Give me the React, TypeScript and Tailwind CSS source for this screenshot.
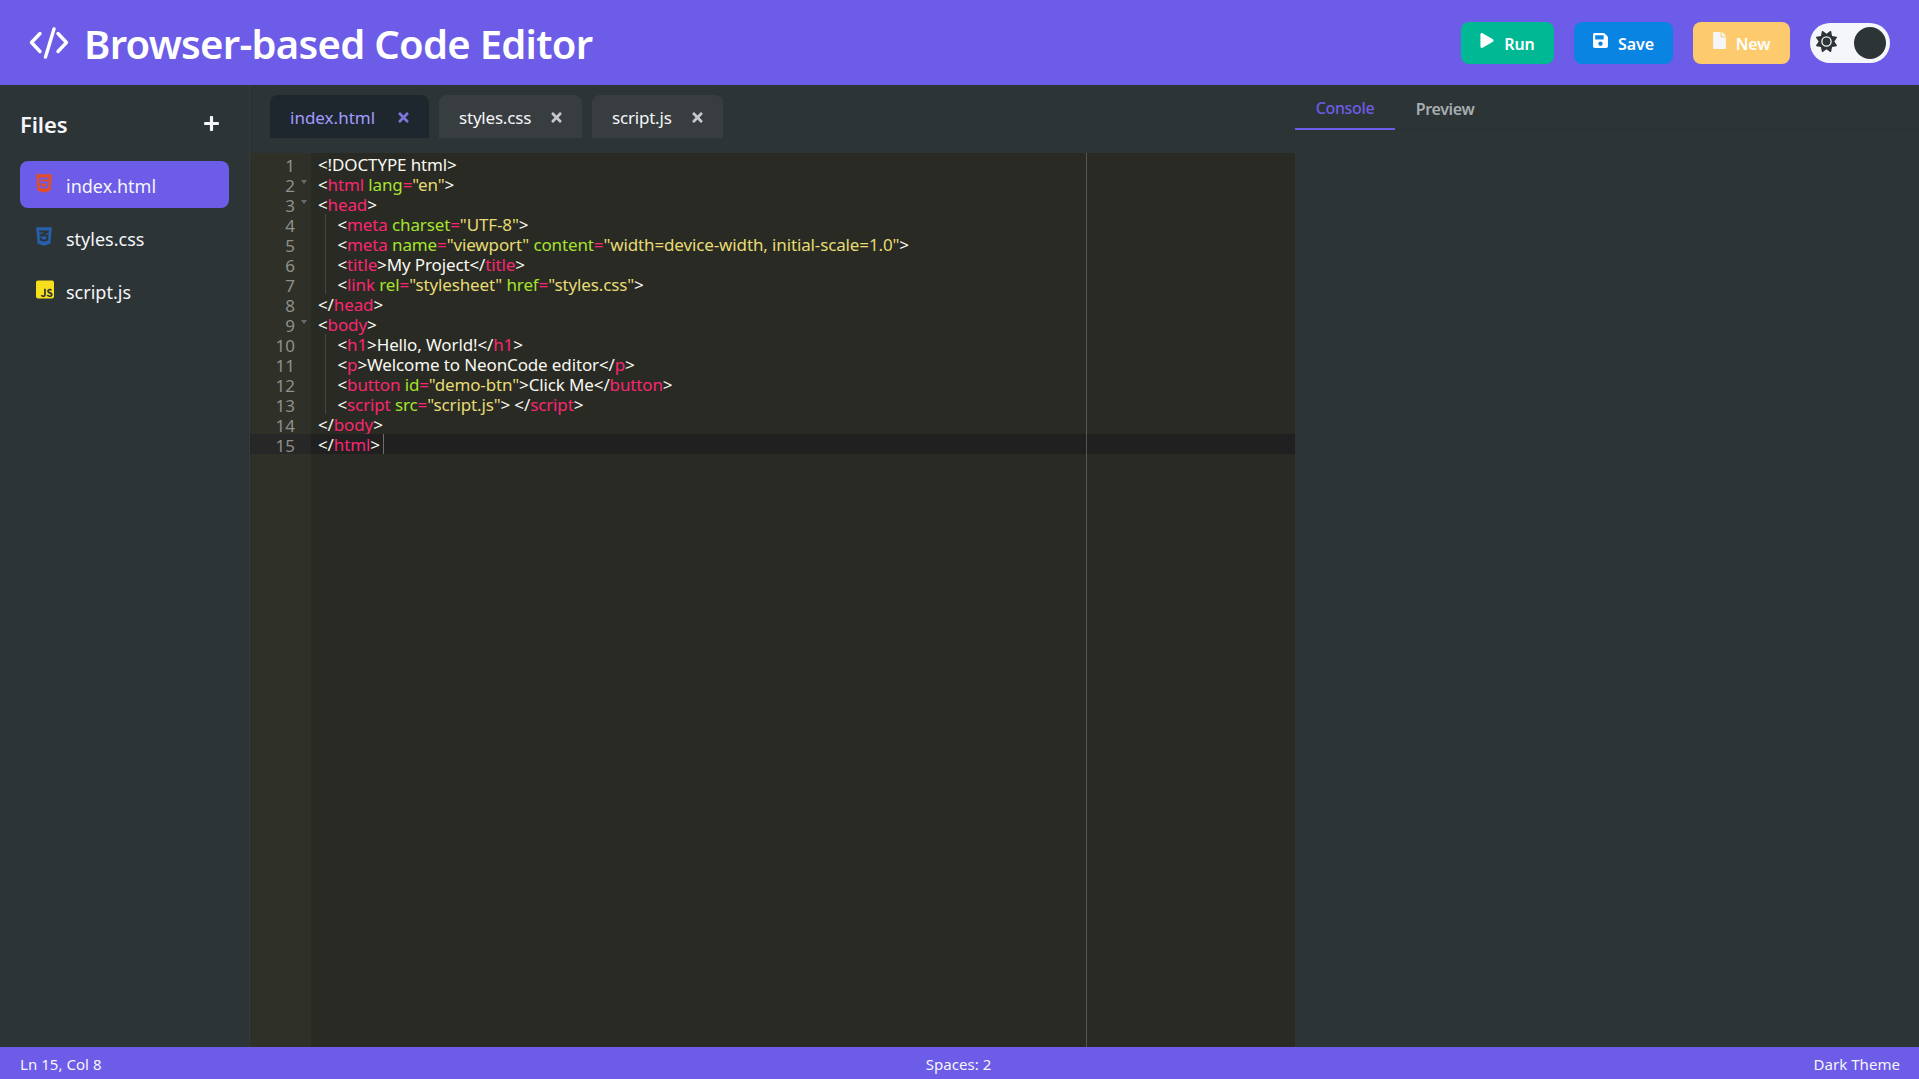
import React from "react";
import { FaPlay, FaSave, FaFile, FaPlus, FaTimes, FaHtml5, FaCss3Alt, FaJsSquare } from "react-icons/fa";
import { FaSun } from "react-icons/fa6";

type Seg = [string, string];
const W = "text-[#f8f8f2]";
const T = "text-[#f92672]";
const A = "text-[#a6e22e]";
const S = "text-[#e6db74]";

const lines: { indent: number; fold?: boolean; segs: Seg[] }[] = [
  { indent: 0, segs: [[W, "<!DOCTYPE html>"]] },
  { indent: 0, fold: true, segs: [[W, "<"], [T, "html"], [W, " "], [A, "lang"], [T, "="], [S, '"en"'], [W, ">"]] },
  { indent: 0, fold: true, segs: [[W, "<"], [T, "head"], [W, ">"]] },
  { indent: 1, segs: [[W, "<"], [T, "meta"], [W, " "], [A, "charset"], [T, "="], [S, '"UTF-8"'], [W, ">"]] },
  { indent: 1, segs: [[W, "<"], [T, "meta"], [W, " "], [A, "name"], [T, "="], [S, '"viewport"'], [W, " "], [A, "content"], [T, "="], [S, '"width=device-width, initial-scale=1.0"'], [W, ">"]] },
  { indent: 1, segs: [[W, "<"], [T, "title"], [W, ">My Project</"], [T, "title"], [W, ">"]] },
  { indent: 1, segs: [[W, "<"], [T, "link"], [W, " "], [A, "rel"], [T, "="], [S, '"stylesheet"'], [W, " "], [A, "href"], [T, "="], [S, '"styles.css"'], [W, ">"]] },
  { indent: 0, segs: [[W, "</"], [T, "head"], [W, ">"]] },
  { indent: 0, fold: true, segs: [[W, "<"], [T, "body"], [W, ">"]] },
  { indent: 1, segs: [[W, "<"], [T, "h1"], [W, ">Hello, World!</"], [T, "h1"], [W, ">"]] },
  { indent: 1, segs: [[W, "<"], [T, "p"], [W, ">Welcome to NeonCode editor</"], [T, "p"], [W, ">"]] },
  { indent: 1, segs: [[W, "<"], [T, "button"], [W, " "], [A, "id"], [T, "="], [S, '"demo-btn"'], [W, ">Click Me</"], [T, "button"], [W, ">"]] },
  { indent: 1, segs: [[W, "<"], [T, "script"], [W, " "], [A, "src"], [T, "="], [S, '"script.js"'], [W, "> </"], [T, "script"], [W, ">"]] },
  { indent: 0, segs: [[W, "</"], [T, "body"], [W, ">"]] },
  { indent: 0, segs: [[W, "</"], [T, "html"], [W, ">"]] },
];

const font = "font-['Noto_Sans','Open_Sans',sans-serif]";

function Btn({ bg, icon, label, w }: { bg: string; icon: React.ReactNode; label: string; w: string }) {
  return (
    <button className={`flex h-[42px] items-center justify-center gap-[10px] rounded-lg text-[16px] font-semibold tracking-[-0.1px] text-white ${bg} ${w}`}>
      {icon}
      <span className="translate-y-[1px]">{label}</span>
    </button>
  );
}

function FileTab({ name, active, w }: { name: string; active?: boolean; w: string }) {
  return (
    <div className={`flex h-[43px] items-center justify-between rounded-t-lg pl-5 pr-[19px] ${w} ${active ? "bg-[#1e272e] text-[#a29bfe]" : "bg-[#383d40] text-[#f5f6fa]"}`}>
      <span className={`translate-y-[1px] text-[17px] ${active ? "" : "tracking-[-0.2px]"}`}>{name}</span>
      <FaTimes className={`h-[15px] w-[13px] translate-y-[1px] ${active ? "text-[#7d75d8]" : "text-[#c6c8cc]"}`} />
    </div>
  );
}

function FileRow({ name, icon, active }: { name: string; icon: React.ReactNode; active?: boolean }) {
  return (
    <div className={`flex h-[47px] items-center rounded-lg pl-4 text-[18px] text-[#f5f6fa] ${active ? "bg-[#6c5ce7]" : ""}`}>
      <span className="flex w-[30px] shrink-0 -translate-y-[1px] items-center">{icon}</span>
      <span className="translate-y-[2px]">{name}</span>
    </div>
  );
}

function Logo() {
  return (
    <svg viewBox="0 0 40 32" className="h-8 w-10" fill="none" stroke="currentColor" strokeWidth="3.4" strokeLinecap="round" strokeLinejoin="round">
      <path d="M11 6.5 2.5 15.5 11 24.5" />
      <path d="M25 2 16.5 30" />
      <path d="M29 6.5 37.5 15.5 29 24.5" />
    </svg>
  );
}

export default function App() {
  return (
    <div className={`flex h-[1079px] w-[1919px] flex-col overflow-hidden bg-[#2d3436] ${font}`}>
      <header className="flex h-[85px] shrink-0 items-center justify-between bg-[#6c5ce7] pl-[29px] pr-[29px]">
        <div className="flex items-center gap-[15px] text-white">
          <Logo />
          <h1 className="translate-y-[1px] text-[40px] font-semibold leading-none tracking-[-0.72px]">Browser-based Code Editor</h1>
        </div>
        <div className="flex items-center gap-5">
          <Btn bg="bg-[#00b894]" w="w-[93px]" icon={<FaPlay className="h-[15px] w-[14px] -translate-y-[2px]" />} label="Run" />
          <Btn bg="bg-[#0984e3]" w="w-[99px]" icon={<FaSave className="h-[17px] w-[15px] -translate-y-[2px]" />} label="Save" />
          <Btn bg="bg-[#fdcb6e]" w="w-[97px]" icon={<FaFile className="h-[17px] w-[13px] -translate-y-[2px] text-[#f5f6fa]" />} label="New" />
          <div className="flex h-10 w-20 items-center justify-between rounded-full bg-[#f5f6fa] pl-[6px] pr-1">
            <FaSun className="h-[21px] w-[21px] -translate-y-[1px] text-[#2d3436]" />
            <div className="h-8 w-8 rounded-full bg-[#2d3436]" />
          </div>
        </div>
      </header>

      <div className="flex min-h-0 flex-1">
        <aside className="w-[250px] shrink-0 border-r border-[#343b3d] pl-5 pr-[20px]">
          <div className="flex h-[76px] items-center justify-between pr-[9px] pt-[2px] text-[#f5f6fa]">
            <span className="text-[22px] font-semibold tracking-[-0.1px]">Files</span>
            <FaPlus className="h-[17px] w-[17px] -translate-y-[1px]" />
          </div>
          <div className="flex flex-col gap-[6px]">
            <FileRow active name="index.html" icon={<FaHtml5 className="h-[21px] w-[16px] text-[#e44d26]" />} />
            <FileRow name="styles.css" icon={<FaCss3Alt className="h-[21px] w-[16px] text-[#2660ad]" />} />
            <FileRow name="script.js" icon={<FaJsSquare className="h-[21px] w-[18px] text-[#f7df1e]" />} />
          </div>
        </aside>

        <main className="flex w-[1045px] shrink-0 flex-col">
          <div className="flex h-[68px] shrink-0 items-start gap-[10px] pl-5 pt-[10px]">
            <FileTab active name="index.html" w="w-[159px]" />
            <FileTab name="styles.css" w="w-[143px]" />
            <FileTab name="script.js" w="w-[131px]" />
          </div>
          <div className="relative flex min-h-0 flex-1 bg-[#292a23] text-[17px] leading-5">
            <div className="w-[61px] shrink-0 bg-[#2f3129] pt-px text-[#8f908a]">
              {lines.map((l, i) => (
                <div key={i} className={`relative flex h-5 justify-end pr-4 ${i === 14 ? "bg-[#272727]" : ""}`}>
                  <span className="translate-y-[2px]">{i + 1}</span>
                  {l.fold && <span className="absolute right-[4px] top-[6px] h-0 w-0 border-x-[3px] border-t-[4px] border-x-transparent border-t-[#6b6c66]" />}
                </div>
              ))}
            </div>
            <div className="flex-1 pt-px">
              {lines.map((l, i) => (
                <div key={i} className={`relative h-5 whitespace-pre pl-[7px] tracking-[-0.13px] ${i === 14 ? "bg-[#202020]" : ""}`}>
                  {l.indent > 0 && <span className="absolute bottom-0 left-[14px] top-0 w-px bg-[#46473f]" />}
                  <span className={`inline-block translate-y-[1px] ${l.indent > 0 ? "pl-[19.5px]" : ""}`}>
                    {l.segs.map((s, j) => (
                      <span key={j} className={s[0]}>{s[1]}</span>
                    ))}
                  </span>
                  {i === 14 && <span className="ml-[3px] inline-block h-5 w-px bg-[#6d6d6a] align-top" />}
                </div>
              ))}
            </div>
            <div className="absolute bottom-0 left-[836px] top-0 w-px bg-[#555651]" />
          </div>
        </main>

        <section className="flex-1">
          <div className="flex h-[45px] items-end border-b border-[#2a3032] text-[16px] tracking-[-0.35px]">
            <div className="-mb-px flex h-[46px] w-[100px] items-center justify-center border-b-2 border-[#6c5ce7] pt-[3px] font-medium text-[#6c5ce7]">Console</div>
            <div className="flex h-[45px] w-[100px] items-center justify-center pt-[4px] font-semibold text-[#a8adb0]">Preview</div>
          </div>
        </section>
      </div>

      <footer className="flex h-8 shrink-0 items-center justify-between bg-[#6c5ce7] pl-5 pr-[19px] text-[15px] tracking-[0.05px] text-[#f5f6fa]">
        <span className="translate-y-[1px]">Ln 15, Col 8</span>
        <span className="translate-x-[1px] translate-y-[1px]">Spaces: 2</span>
        <span className="translate-y-[1px]">Dark Theme</span>
      </footer>
    </div>
  );
}
